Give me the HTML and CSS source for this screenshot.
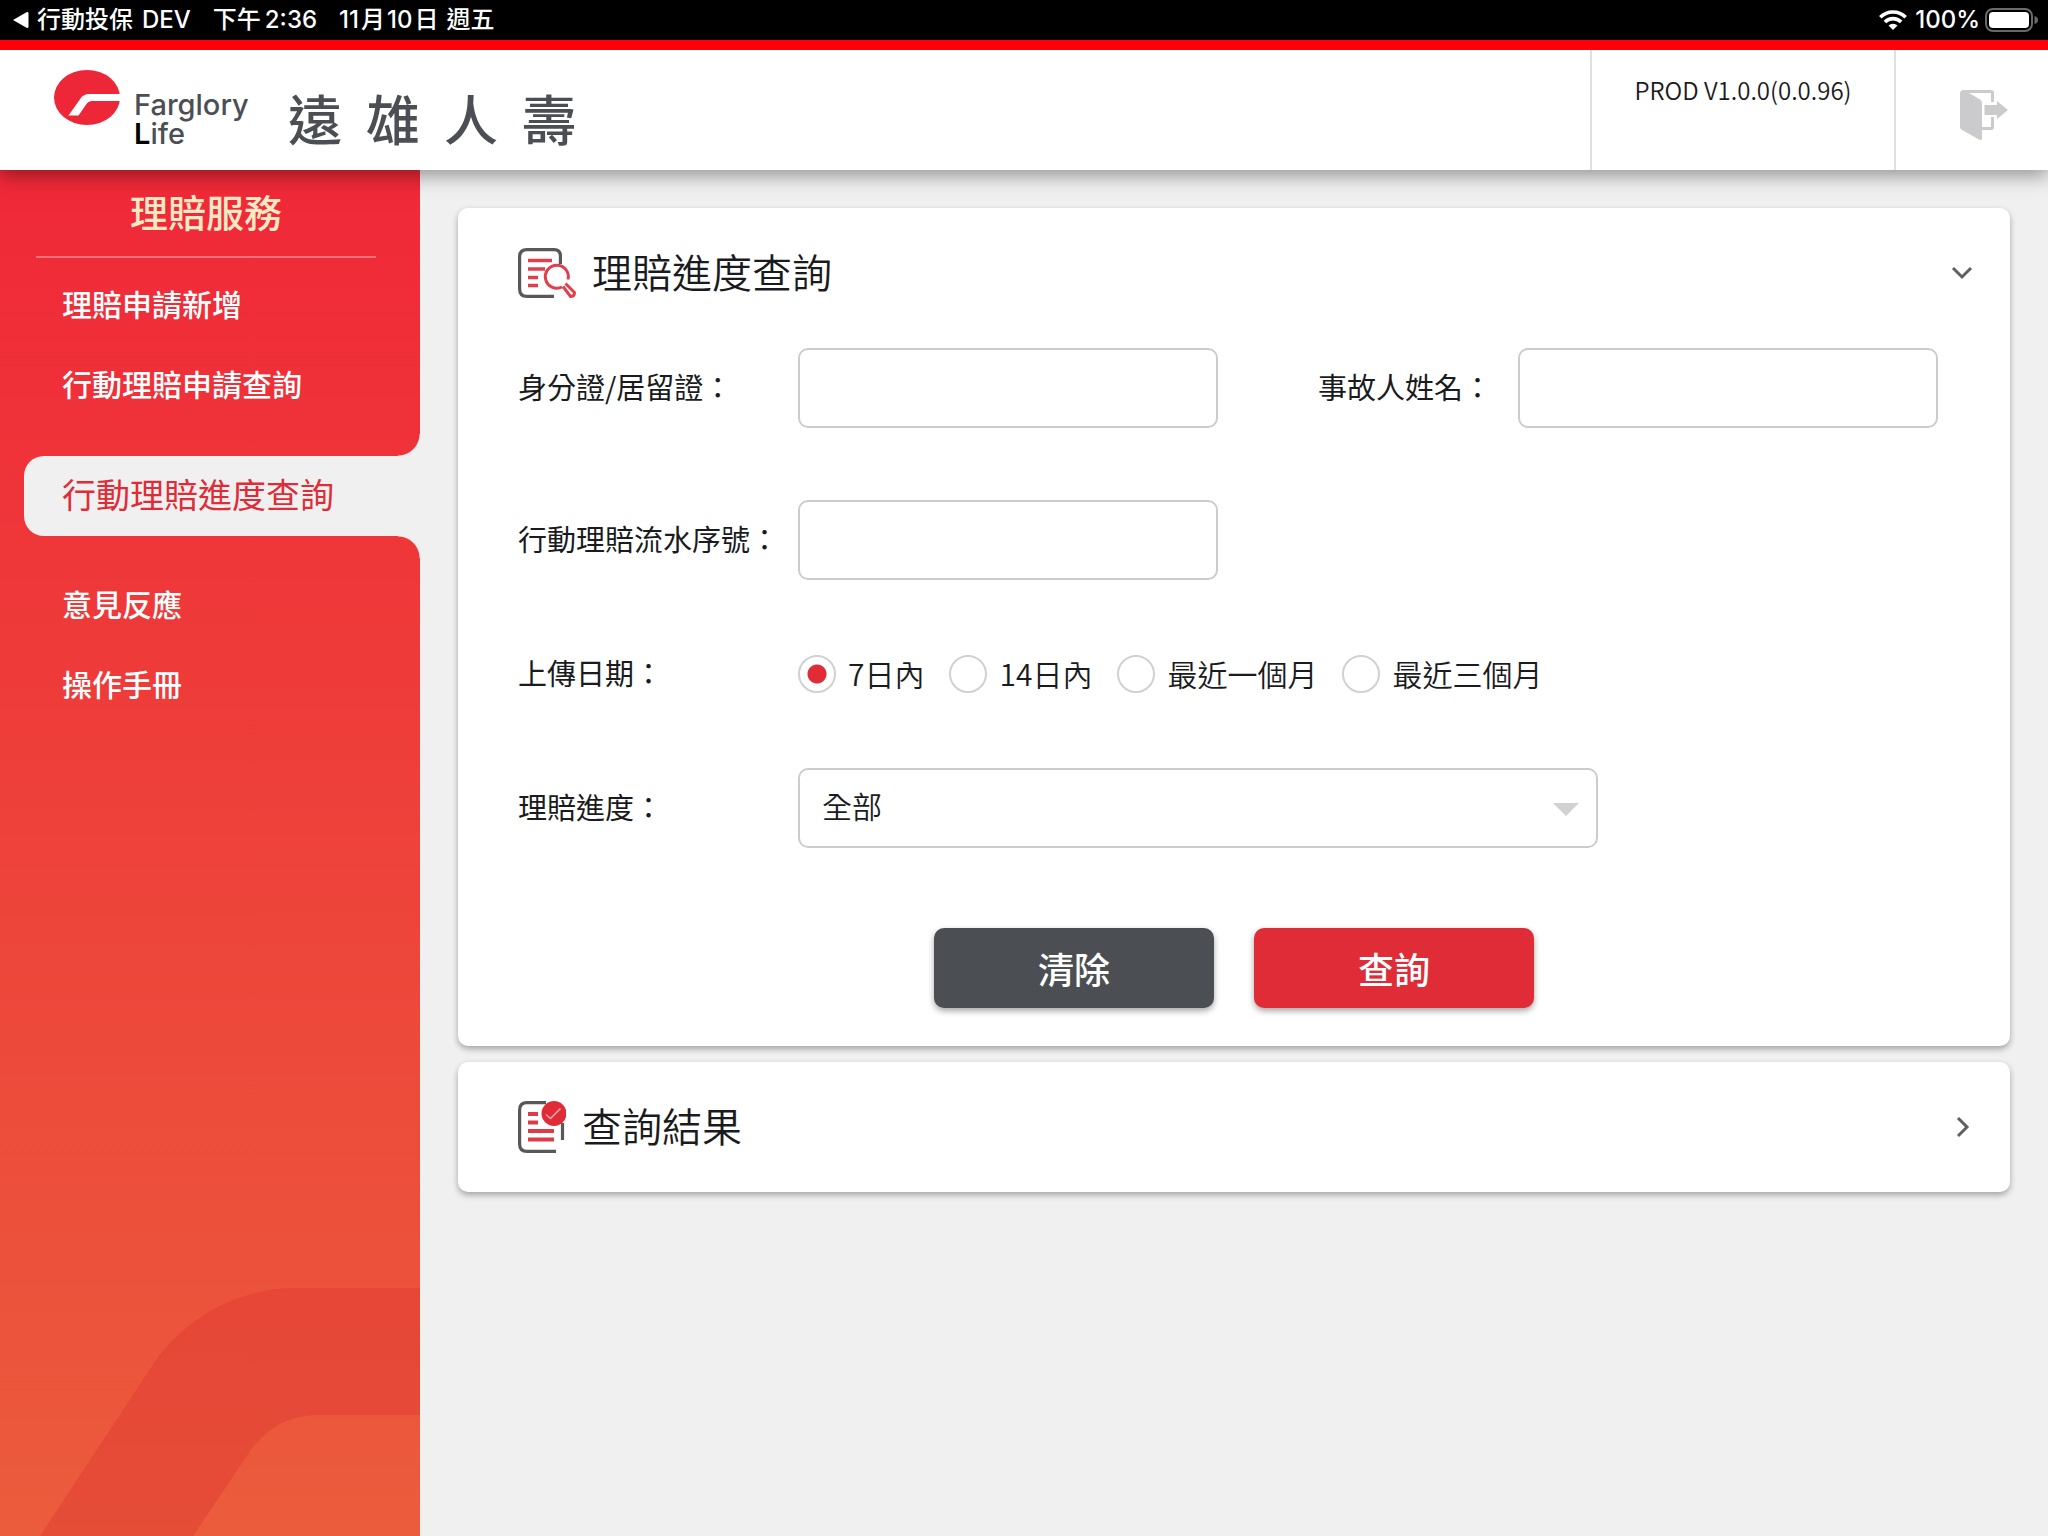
FILE: index.html
```html
<!DOCTYPE html>
<html lang="zh-Hant">
<head>
<meta charset="utf-8">
<meta name="viewport" content="width=device-width, initial-scale=1">
<title>理賠進度查詢</title>
<link rel="stylesheet" href="styles.css">
</head>
<body>
<div class="status-bar">
  <div class="status-group">
    <svg class="back-mark" viewBox="0 0 16 18" aria-hidden="true"><path d="M0 9 13.500 1.300Q15.500.5 15.500 2.500V15.500Q15.500 17.500 13.500 16.700Z" fill="#fff"/></svg>
    <span class="status-app"><span>行動投保</span><span>DEV</span></span>
    <span class="status-time"><span>下午</span><span>2:36</span></span>
    <span class="status-date"><span>11</span><span>月</span><span>10</span><span>日</span><span class="weekday">週五</span></span>
  </div>
  <div class="status-group">
    <svg class="wifi" viewBox="0 0 28 20" aria-hidden="true"><g fill="none" stroke="#fff" stroke-width="3.600"><path d="M1.300 7.200a18 18 0 0 1 25.400 0"/><path d="M5.900 12a11.500 11.500 0 0 1 16.200 0"/></g><path d="M14 20 9.500 15.500a6.400 6.400 0 0 1 9 0Z" fill="#fff"/></svg>
    <span class="status-level">100%</span>
    <svg class="battery" viewBox="0 0 53 24" aria-hidden="true"><rect x="1" y="1" width="46" height="22" rx="7" fill="none" stroke="#6b6b6b" stroke-width="2"/><rect x="4" y="4" width="40" height="16" rx="4" fill="#fff"/><path d="M49.500 8q3.500 1 3.500 4t-3.500 4Z" fill="#6b6b6b"/></svg>
  </div>
</div>

<header class="app-header">
  <div class="brand">
    <svg class="brand-mark" viewBox="0 0 66 55" aria-hidden="true"><ellipse cx="33" cy="27.500" rx="33" ry="27.500" fill="#ed2738"/><path d="M14.500 45.500 26.500 28.500Q29.500 24 35 24H67V31H38Q34.500 31 32.500 34L24.500 45.500Z" fill="#fff"/></svg>
    <div class="brand-latin"><span>Farglory</span><span><b>L</b>ife</span></div>
    <div class="brand-han"><span>遠</span><span>雄</span><span>人</span><span>壽</span></div>
  </div>
  <div class="version">PROD V1.0.0(0.0.96)</div>
  <button class="logout" type="button" aria-label="登出">
    <svg viewBox="0 0 48 50" aria-hidden="true"><path d="M4 0H31Q34 0 34 3V12H31V3H9L20 9.500Q22 10.500 22 13V37H31V27H34V37Q34 40 31 40H22V48Q22 51 19 49.500L2 40Q0 39 0 37V3Q0 0 4 0Z" fill="#cbcbcd"/><path d="M24.500 15H37V11L48 20 37 29V25H24.500Z" fill="#cbcbcd"/></svg>
  </button>
</header>

<div class="layout">
  <nav class="sidebar">
    <svg class="sidebar-art" viewBox="0 0 420 248" aria-hidden="true"><path d="M420 0H296C242 0 190 26 156 72L40 248H193L246 169Q273 127 318 127H420Z" fill="#d72c30" fill-opacity=".3"/></svg>
    <h1 class="sidebar-title">理賠服務</h1>
    <ul class="menu">
      <li><a class="menu-link" href="#">理賠申請新增</a></li>
      <li><a class="menu-link" href="#">行動理賠申請查詢</a></li>
      <li class="menu-current"><a class="menu-link" href="#" aria-current="page">行動理賠進度查詢</a></li>
      <li><a class="menu-link" href="#">意見反應</a></li>
      <li><a class="menu-link" href="#">操作手冊</a></li>
    </ul>
  </nav>

  <main class="content">
    <section class="card">
      <div class="card-head">
        <svg class="icon-search" viewBox="0 0 58 50" aria-hidden="true"><g fill="none" stroke="#58585a" stroke-width="3.200"><path d="M42.400 16V8Q42.400 1.600 36 1.600H9Q1.600 1.600 1.600 9V41Q1.600 48.400 9 48.400H36"/></g><g fill="none" stroke="#e0404c" stroke-width="3.600"><path d="M10 12.500H34M10 21H27M10 29.500H20M10 37.500H20"/><g stroke-width="3"><path d="M50 31.500A11.500 11.500 0 1 0 44 39"/><path d="M45 38.500 52.500 48.500Q56.500 48.500 56.500 44.500L47.500 35.500"/></g></g></svg>
        <h2>理賠進度查詢</h2>
        <button class="toggle" type="button" aria-label="收合"><svg viewBox="0 0 24 24" aria-hidden="true"><path d="m3 7 9 9 9-9" fill="none" stroke="#606060" stroke-width="3"/></svg></button>
      </div>
      <form class="query">
        <div class="row row-pair">
          <div class="field">
            <label class="field-label" for="id-no">身分證/居留證：</label>
            <input class="box" id="id-no" type="text">
          </div>
          <div class="field">
            <label class="field-label field-label-short" for="name">事故人姓名：</label>
            <input class="box" id="name" type="text">
          </div>
        </div>
        <div class="row">
          <label class="field-label" for="serial">行動理賠流水序號：</label>
          <input class="box" id="serial" type="text">
        </div>
        <div class="row" role="radiogroup" aria-labelledby="date-label">
          <span class="field-label" id="date-label">上傳日期：</span>
          <div class="choices">
            <label class="choice"><input type="radio" name="range" checked><span>7日內</span></label>
            <label class="choice"><input type="radio" name="range"><span>14日內</span></label>
            <label class="choice"><input type="radio" name="range"><span>最近一個月</span></label>
            <label class="choice"><input type="radio" name="range"><span>最近三個月</span></label>
          </div>
        </div>
        <div class="row">
          <label class="field-label" for="progress">理賠進度：</label>
          <div class="select-wrap">
            <select class="box" id="progress"><option>全部</option></select>
          </div>
        </div>
        <div class="actions">
          <button class="btn btn-dark" type="reset">清除</button>
          <button class="btn btn-red" type="button">查詢</button>
        </div>
      </form>
    </section>

    <section class="card">
      <div class="card-head">
        <svg class="icon-result" viewBox="0 0 48 52" aria-hidden="true"><g fill="none" stroke="#58585a" stroke-width="3.200"><path d="M28 1.600H9Q1.600 1.600 1.600 9V43Q1.600 50.400 9 50.400H38M44.500 22V39"/></g><path d="M10 13H20M10 21.500H20M10 30H36M10 38.500H36" fill="none" stroke="#df3b46" stroke-width="3.800"/><circle cx="36" cy="12.500" r="12.500" fill="#df2c37"/><path d="m28 13.500 4.500 4 10-10" fill="none" stroke="#f4a3a8" stroke-width="1.600"/></svg>
        <h2>查詢結果</h2>
        <button class="toggle" type="button" aria-label="展開"><svg viewBox="0 0 24 24" aria-hidden="true"><path d="m8 3 9 9-9 9" fill="none" stroke="#606060" stroke-width="3"/></svg></button>
      </div>
    </section>
  </main>
</div>
</body>
</html>
```

FILE: styles.css
```css
*, *::before, *::after { box-sizing: border-box; }

body {
  margin: 0;
  min-height: 100vh;
  display: flex;
  flex-direction: column;
  background: #f0f0f0;
  color: #1a1b20;
  font-family: "Noto Sans CJK TC", sans-serif;
}

button, input, select { font: inherit; color: inherit; }
h1, h2, ul { margin: 0; padding: 0; }

/* Device status bar */
.status-bar {
  height: 40px;
  flex: none;
  display: flex;
  justify-content: space-between;
  align-items: center;
  padding: 0 10px 0 13px;
  background: #000;
  color: #fff;
  font-family: Inter, "Noto Sans CJK TC", sans-serif;
  font-size: 24px;
  font-weight: 500;
  line-height: 40px;
  white-space: nowrap;
}
.status-group { display: flex; align-items: center; }
.back-mark { width: 16px; height: 18px; margin-right: 8px; }
.status-app { display: flex; gap: 9px; }
.status-time { display: flex; gap: 4px; margin: 0 22px; }
.status-date { display: flex; gap: 2px; }
.weekday { margin-left: 6px; }
.wifi { width: 28px; height: 20px; margin-right: 8px; }
.battery { width: 53px; height: 24px; margin-left: 5px; }

/* Header */
.app-header {
  position: relative;
  z-index: 1;
  flex: none;
  display: flex;
  height: 130px;
  border-top: 10px solid #ff000a;
  background: #fff;
  box-shadow: 0 6px 18px rgba(0, 0, 0, .38);
}
.brand {
  flex: 1;
  display: flex;
  align-items: flex-start;
  padding: 20px 0 0 54px;
  color: #4b4f54;
}
.brand-mark { width: 66px; height: 55px; margin-right: 14px; }
.brand-latin {
  display: flex;
  flex-direction: column;
  width: 154px;
  padding-top: 20px;
  font-family: Inter, sans-serif;
  font-size: 29px;
  font-weight: 500;
  line-height: 29px;
}
.brand-latin b { color: #000; font-weight: 600; }
.brand-han {
  display: flex;
  gap: 24px;
  padding-top: 18px;
  font-size: 54px;
  font-weight: 500;
  line-height: 60px;
}
.version {
  width: 304px;
  padding-top: 22px;
  border-left: 2px solid #e0e0e0;
  font-size: 24px;
  font-weight: 350;
  line-height: 36px;
  text-align: center;
}
.logout {
  width: 154px;
  padding: 1px 0 0 64px;
  border: 0;
  border-left: 2px solid #e0e0e0;
  background: none;
}
.logout svg { display: block; width: 48px; height: 50px; margin-top: 8px; }

/* Page body */
.layout { flex: 1; display: flex; }

.sidebar {
  position: relative;
  flex: none;
  width: 420px;
  padding-bottom: 248px;
  background: linear-gradient(#f02838, #eb5c3c);
  color: #fff;
}
.sidebar-art {
  position: absolute;
  right: 0;
  bottom: 0;
  width: 420px;
  height: 248px;
}
.sidebar-title {
  margin: 0 44px 0 36px;
  height: 88px;
  border-bottom: 2px solid #f7717b;
  color: #ffe9c4;
  font-size: 38px;
  font-weight: 500;
  line-height: 82px;
  text-align: center;
}
.menu { list-style: none; padding-top: 6px; }
.menu-link {
  display: block;
  padding: 0 0 2px 62px;
  color: #fff;
  font-size: 30px;
  font-weight: 500;
  line-height: 78px;
  text-decoration: none;
}
.menu-current {
  position: relative;
  margin: 32px 0 28px 24px;
  border-radius: 20px 0 0 20px;
  background: #f0f0f0;
}
.menu-current .menu-link {
  padding: 0 0 4px 38px;
  color: #df2c37;
  font-size: 34px;
  font-weight: 400;
  line-height: 76px;
}
.menu-current::before, .menu-current::after {
  content: "";
  position: absolute;
  right: 0;
  width: 22px;
  height: 22px;
}
.menu-current::before {
  bottom: 100%;
  background: radial-gradient(circle at 0 0, transparent 21px, #f0f0f0 22px);
}
.menu-current::after {
  top: 100%;
  background: radial-gradient(circle at 0 100%, transparent 21px, #f0f0f0 22px);
}

.content {
  flex: 1;
  min-width: 0;
  display: flex;
  flex-direction: column;
  gap: 16px;
  padding: 38px;
}
.card {
  border-radius: 10px;
  background: #fff;
  box-shadow: 0 3px 6px rgba(0, 0, 0, .32);
}
.card-head {
  display: flex;
  align-items: center;
  height: 130px;
  padding: 0 36px 0 60px;
}
.card-head h2 {
  flex: 1;
  margin-left: 16px;
  padding-bottom: 4px;
  font-size: 40px;
  font-weight: 350;
  line-height: 60px;
}
.icon-search { width: 58px; height: 50px; }
.icon-result { width: 48px; height: 52px; }
.toggle { padding: 0; border: 0; background: none; }
.toggle svg { display: block; width: 24px; height: 24px; }

/* Query form */
.query { padding: 10px 72px 38px 60px; }
.row { display: flex; align-items: center; min-height: 80px; margin-bottom: 54px; }
.row-pair { justify-content: space-between; gap: 24px; margin-bottom: 72px; }
.field { display: flex; align-items: center; }
.field-label {
  flex: none;
  width: 280px;
  padding-bottom: 4px;
  font-size: 29px;
  font-weight: 400;
  line-height: 44px;
}
.field-label-short { width: 200px; }
.box {
  width: 420px;
  min-width: 0;
  height: 80px;
  padding: 0 22px 6px;
  border: 2px solid #ccc;
  border-radius: 10px;
  background: #fff;
  font-size: 30px;
}
.choices { display: flex; flex-wrap: wrap; gap: 25px; }
.choice {
  display: flex;
  align-items: center;
  gap: 12px;
  font-size: 30px;
  font-weight: 350;
  line-height: 44px;
}
.choice span { padding-bottom: 2px; }
.choice input {
  appearance: none;
  width: 38px;
  height: 38px;
  margin: 0;
  border: 2px solid #d2d0d1;
  border-radius: 50%;
  background: #fff;
}
.choice input:checked { background: radial-gradient(circle, #df2c37 9px, #fff 10px); }
.select-wrap { position: relative; flex: 0 1 800px; }
.select-wrap .box { width: 100%; appearance: none; font-weight: 350; }
.select-wrap::after {
  content: "";
  position: absolute;
  right: 19px;
  top: 35px;
  border: 13px solid transparent;
  border-top: 13px solid #d2d0d1;
  border-bottom: 0;
  pointer-events: none;
}
.actions { display: flex; justify-content: center; gap: 40px; margin: 80px 0 0 12px; }
.row:last-of-type { margin-bottom: 0; }
.btn {
  width: 280px;
  height: 80px;
  padding: 0;
  border: 0;
  border-radius: 10px;
  color: #fff;
  font-size: 36px;
  font-weight: 500;
  box-shadow: 0 3px 6px rgba(0, 0, 0, .35);
}
.btn-dark { background: #4b4e53; }
.btn-red { background: #df2c37; }
```
